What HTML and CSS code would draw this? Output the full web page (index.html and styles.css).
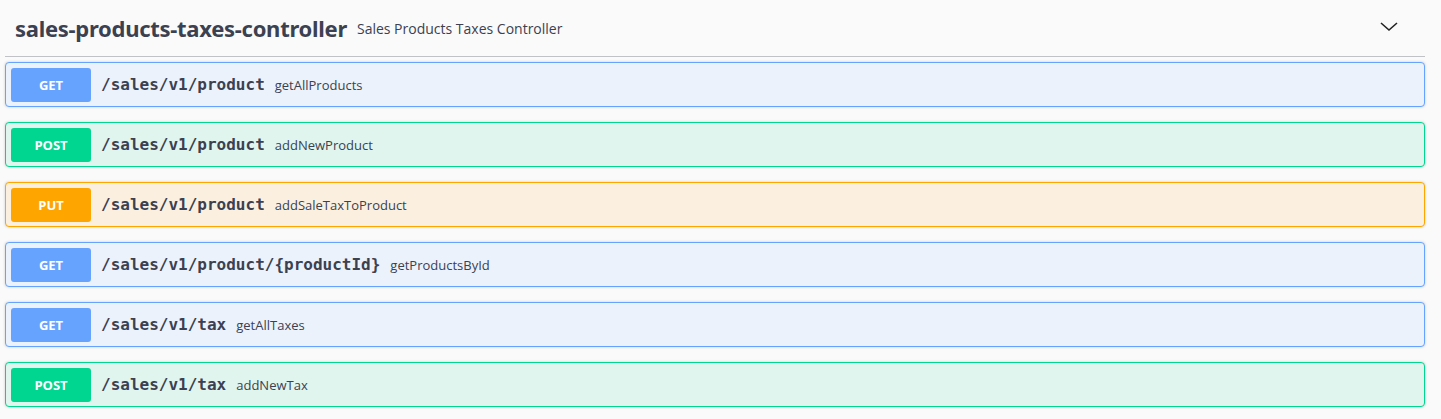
FILE: index.html
```html
<!DOCTYPE html>
<html>
<head>
<meta charset="utf-8">
<link rel="stylesheet" href="styles.css">
</head>
<body>
<div class="tag-section">
  <h3 class="tag">
    <span class="tag-name">sales-products-taxes-controller</span>
    <small class="tag-desc">Sales Products Taxes Controller</small>
    <span class="spacer"></span>
    <svg class="chevron" width="20" height="20" viewBox="0 0 20 20"><path d="M2 6 L10 13 L18 6" fill="none" stroke="#222" stroke-width="1.6"/></svg>
  </h3>
  <div class="ops">
    <div class="op op-get"><span class="method">GET</span><span class="path">/sales/v1/product</span><span class="summary">getAllProducts</span></div>
    <div class="op op-post"><span class="method">POST</span><span class="path">/sales/v1/product</span><span class="summary">addNewProduct</span></div>
    <div class="op op-put"><span class="method">PUT</span><span class="path">/sales/v1/product</span><span class="summary">addSaleTaxToProduct</span></div>
    <div class="op op-get"><span class="method">GET</span><span class="path">/sales/v1/product/{productId}</span><span class="summary">getProductsById</span></div>
    <div class="op op-get"><span class="method">GET</span><span class="path">/sales/v1/tax</span><span class="summary">getAllTaxes</span></div>
    <div class="op op-post"><span class="method">POST</span><span class="path">/sales/v1/tax</span><span class="summary">addNewTax</span></div>
  </div>
</div>
</body>
</html>
```
FILE: styles.css
```css
html, body {
  margin: 0;
  padding: 0;
  background: #fafafa;
  font-family: "Open Sans", "Noto Sans", sans-serif;
  color: #3b4151;
}
.tag-section {
  padding: 0 16px 0 5px;
}
.tag {
  display: flex;
  align-items: center;
  margin: 0 0 5px;
  height: 57px;
  padding: 0 0 0 10px;
  border-bottom: 1px solid rgba(59, 65, 81, 0.3);
  box-sizing: border-box;
}
.tag-name {
  font-family: "Noto Sans", sans-serif;
  font-size: 22px;
  font-weight: 700;
  letter-spacing: -0.28px;
  color: #3b4151;
}
.tag-desc {
  font-size: 14px;
  font-weight: 400;
  margin-left: 10px;
  color: #3b4151;
  font-family: "Open Sans", sans-serif;
  letter-spacing: 0;
}
.spacer { flex: 1; }
.chevron { margin-right: 26px; margin-top: -2px; }
.ops {
  display: flex;
  flex-direction: column;
}
.op {
  display: flex;
  align-items: center;
  height: 45px;
  box-sizing: border-box;
  padding: 0 5px;
  margin-bottom: 15px;
  border: 1px solid;
  border-radius: 4px;
  box-shadow: 0 0 3px rgba(0, 0, 0, 0.19);
}
.method {
  width: 80px;
  height: 34px;
  display: flex;
  align-items: center;
  justify-content: center;
  border-radius: 3px;
  color: #fff;
  font-size: 13px;
  font-weight: 700;
  font-family: "Open Sans", sans-serif;
}
.path {
  padding: 0 10px;
  font-family: "DejaVu Sans Mono", monospace;
  font-size: 16px;
  font-weight: 700;
  color: #3b4151;
}
.summary {
  font-size: 13px;
  color: #3b4151;
  font-family: "Open Sans", sans-serif;
}
.op-get { background: #ecf2fc; border-color: #66a3ff; }
.op-get .method { background: #66a3ff; }
.op-post { background: #e0f5ee; border-color: #00d68f; }
.op-post .method { background: #00d68f; }
.op-put { background: #fbf0e0; border-color: #ffa500; }
.op-put .method { background: #ffa500; }
```
